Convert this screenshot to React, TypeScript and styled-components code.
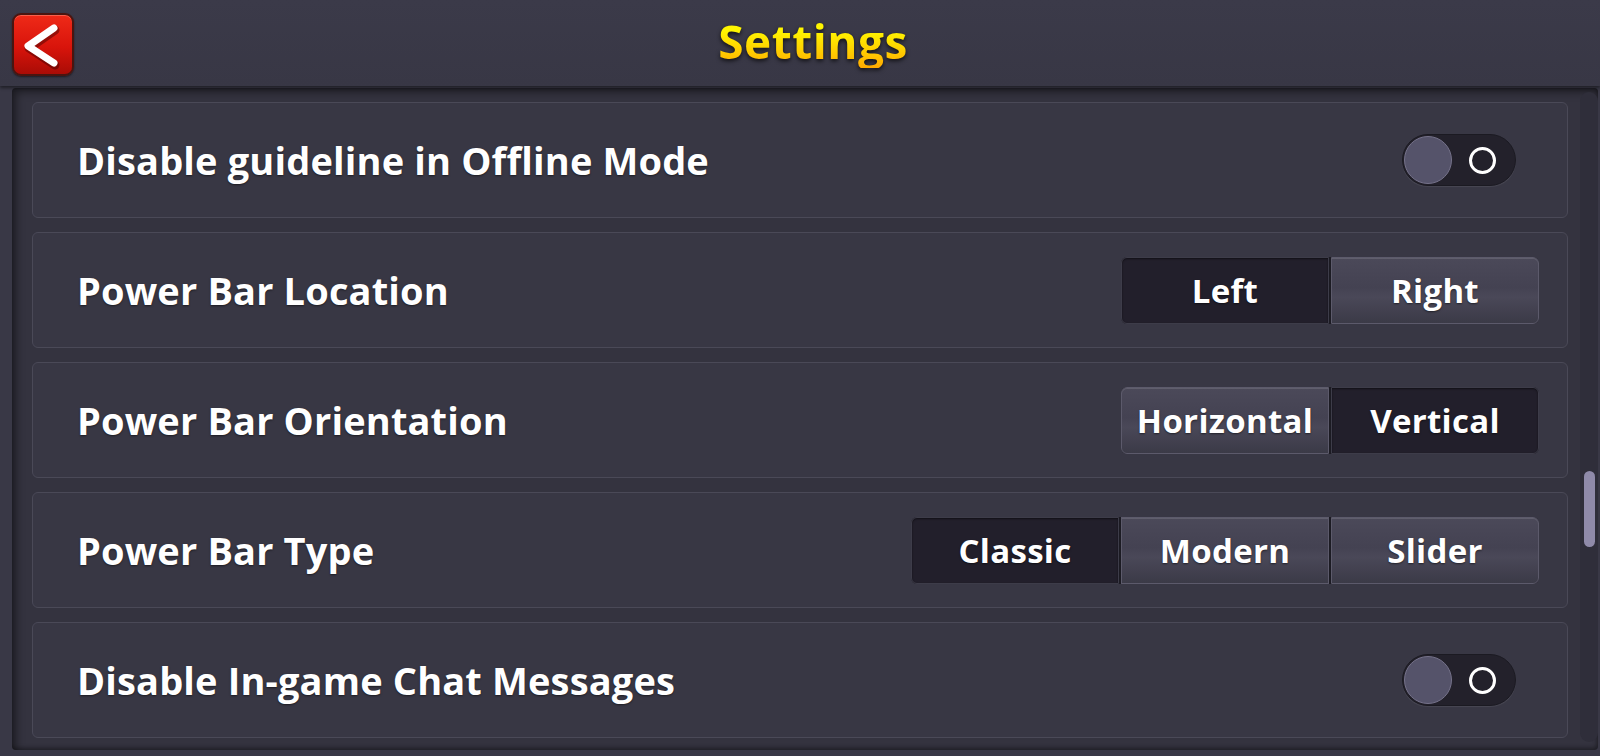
import React, { useState } from "react";
import styled, { createGlobalStyle } from "styled-components";

const Global = createGlobalStyle`
  html, body { margin: 0; padding: 0; }
  body {
    background: #393846;
    font-family: "Open Sans", "Noto Sans", "DejaVu Sans", sans-serif;
    overflow: hidden;
  }
`;

const Screen = styled.div`
  width: 1600px;
  height: 756px;
  display: flex;
  flex-direction: column;
  background: #393846;
`;

const Header = styled.header`
  height: 86px;
  display: grid;
  grid-template-columns: 1fr auto 1fr;
  align-items: center;
  padding-left: 12px;
  background: linear-gradient(#3b3a49, #383745);
  box-shadow: 0 2px 3px rgba(0, 0, 0, 0.45);
  position: relative;
  z-index: 1;
`;

const BackButton = styled.button`
  width: 62px;
  height: 63px;
  margin-top: 2px;
  padding: 0;
  border: 2px solid #4a1510;
  border-radius: 9px;
  background: linear-gradient(#ef2a18 0%, #d8140b 55%, #a90c06 100%);
  box-shadow: inset 0 1px 0 rgba(255, 140, 120, 0.55), 0 1px 2px rgba(0, 0, 0, 0.5);
  display: flex;
  align-items: center;
  justify-content: center;
  cursor: pointer;
`;

const Title = styled.h1`
  margin: 0;
  padding-left: 14px;
  font-size: 46px;
  font-weight: 700;
  letter-spacing: 0.5px;
  background: linear-gradient(#fff600 25%, #ffd400 60%, #ffaa00 100%);
  -webkit-background-clip: text;
  background-clip: text;
  color: transparent;
  filter: drop-shadow(0 2px 2px rgba(0, 0, 0, 0.7));
  line-height: 1;
  padding-bottom: 4px;
`;

const Panel = styled.main`
  flex: 1;
  margin: 2px 2px 6px 12px;
  display: flex;
  background: #34333f;
  border-radius: 4px;
  box-shadow: inset 4px 4px 8px rgba(0, 0, 0, 0.45), inset -1px -2px 4px rgba(0, 0, 0, 0.35);
  overflow: hidden;
`;

const List = styled.div`
  flex: 1;
  display: flex;
  flex-direction: column;
  gap: 14px;
  padding: 14px 12px 0 20px;
`;

const Row = styled.section`
  height: 116px;
  flex-shrink: 0;
  box-sizing: border-box;
  display: flex;
  align-items: center;
  justify-content: space-between;
  padding-left: 44px;
  border: 1.5px solid #4a4957;
  border-radius: 6px;
  background: #383744;
`;

const Label = styled.span`
  color: #ffffff;
  font-size: 38px;
  font-weight: 700;
  letter-spacing: 0.15px;
  text-shadow: 0 1px 2px rgba(0, 0, 0, 0.5);
`;

const Track = styled.div`
  width: 18px;
  margin: 4px 0 8px 0;
  display: flex;
  justify-content: center;
  background: #2f2e3a;
  border-radius: 9px;
`;

const Thumb = styled.div`
  width: 11px;
  height: 76px;
  margin-top: 379px;
  border-radius: 6px;
  background: #8f8aa9;
`;

const Toggle = styled.div`
  width: 114px;
  height: 52px;
  margin-right: 51px;
  box-sizing: border-box;
  border-radius: 26px;
  background: #23212b;
  border: 1.5px solid #1b1a22;
  box-shadow: 0 1px 1px rgba(255, 255, 255, 0.08);
  display: flex;
  align-items: center;
  justify-content: space-between;
  padding: 0 19px 0 1px;
`;

const Knob = styled.div`
  width: 48px;
  height: 48px;
  border-radius: 50%;
  background: #55536a;
  border: 1.5px solid #75728a;
  box-sizing: border-box;
`;

const Ring = styled.div`
  width: 27px;
  height: 27px;
  border-radius: 50%;
  border: 3.5px solid #ffffff;
  box-sizing: border-box;
`;

const Segments = styled.div`
  display: flex;
  gap: 2px;
  margin-right: 28px;
  background: #1c1b23;
  border-radius: 6px;
`;

const Segment = styled.button<{ $active: boolean }>`
  width: 208px;
  height: 67px;
  box-sizing: border-box;
  padding: 0;
  font-family: inherit;
  font-size: 33px;
  font-weight: 700;
  letter-spacing: 0.3px;
  color: #ffffff;
  text-shadow: 0 1px 2px rgba(0, 0, 0, 0.5);
  cursor: pointer;
  border-radius: 0;
  border: 1.5px solid ${(p) => (p.$active ? "#3d3c49" : "#5c5a6b")};
  background: ${(p) =>
    p.$active
      ? "#221f2b"
      : "linear-gradient(#4b4959 0%, #444252 45%, #4a4858 60%, #3b3a47 100%)"};
  box-shadow: ${(p) => (p.$active ? "inset 0 1px 2px rgba(0,0,0,0.5)" : "inset 0 1px 0 rgba(255,255,255,0.12)")};

  &:first-child {
    border-top-left-radius: 6px;
    border-bottom-left-radius: 6px;
  }
  &:last-child {
    border-top-right-radius: 6px;
    border-bottom-right-radius: 6px;
  }
`;

function SegmentGroup({ options, initial }: { options: string[]; initial: number }) {
  const [sel, setSel] = useState(initial);
  return (
    <Segments>
      {options.map((o, i) => (
        <Segment key={o} $active={sel === i} onClick={() => setSel(i)}>
          {o}
        </Segment>
      ))}
    </Segments>
  );
}

function Switch() {
  return (
    <Toggle>
      <Knob />
      <Ring />
    </Toggle>
  );
}

export default function App() {
  return (
    <>
      <Global />
      <Screen>
        <Header>
          <BackButton aria-label="Back">
            <svg width="58" height="58" viewBox="0 0 58 58">
              <polyline
                points="40,13 14,31 40,48"
                fill="none"
                stroke="rgba(60,0,0,0.45)"
                strokeWidth="9"
                strokeLinecap="round"
                strokeLinejoin="round"
                transform="translate(1,2)"
              />
              <polyline
                points="40,13 14,31 40,48"
                fill="none"
                stroke="#ffffff"
                strokeWidth="7"
                strokeLinecap="round"
                strokeLinejoin="round"
              />
            </svg>
          </BackButton>
          <Title>Settings</Title>
          <span />
        </Header>
        <Panel>
          <List>
            <Row>
              <Label>Disable guideline in Offline Mode</Label>
              <Switch />
            </Row>
            <Row>
              <Label>Power Bar Location</Label>
              <SegmentGroup options={["Left", "Right"]} initial={0} />
            </Row>
            <Row>
              <Label>Power Bar Orientation</Label>
              <SegmentGroup options={["Horizontal", "Vertical"]} initial={1} />
            </Row>
            <Row>
              <Label>Power Bar Type</Label>
              <SegmentGroup options={["Classic", "Modern", "Slider"]} initial={0} />
            </Row>
            <Row>
              <Label>Disable In-game Chat Messages</Label>
              <Switch />
            </Row>
          </List>
          <Track>
            <Thumb />
          </Track>
        </Panel>
      </Screen>
    </>
  );
}
